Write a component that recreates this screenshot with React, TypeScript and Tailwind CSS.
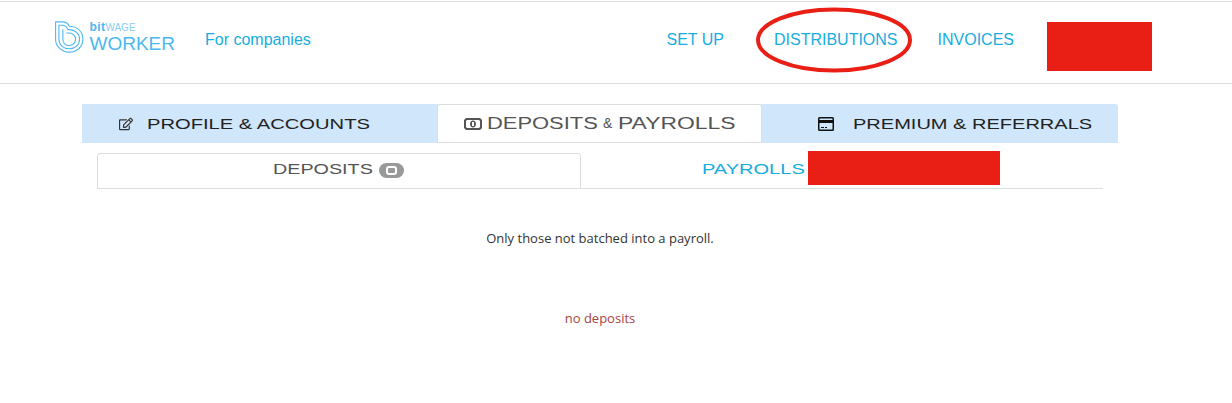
import { FaRegEdit } from 'react-icons/fa'

const WIDE = "font-['Liberation_Sans',sans-serif] inline-block origin-left whitespace-nowrap"

function Logo() {
  return (
    <div className="flex items-center gap-[6px] w-[120px]">
      <svg width="29" height="32" viewBox="0 0 29 32" fill="none" stroke="#4db8f0" strokeWidth="1.1">
        <path d="M.6.6h7.400c3.500 0 5.500 1.800 6.500 4.400 7.500 0 13.900 5 13.900 13 0 7.500-6 13.400-13.700 13.400S.6 25.500.6 18.500z" />
        <path d="M4 4h3.500c3 0 4.500 1.500 5.500 4.500h1.500c6 0 10.500 4 10.500 9.800S20.500 28 14.500 28 4 23.800 4 18.300z" />
        <path d="M8 8v10.300c0 3.700 3 6.400 6.500 6.400s6.500-2.800 6.500-6.400-3-6.300-6.500-6.300h-3" />
      </svg>
      <div className="flex flex-col font-['Liberation_Sans',sans-serif] text-[#4db8f0] leading-none">
        <span className="text-[12px] h-[13px] leading-[12px]"><span className="font-semibold tracking-[0.4px]">bit</span><span className="text-[10px] text-[#8accf2]">WAGE</span></span>
        <span className="text-[19px] leading-[19px] h-[19px] font-light">WORKER</span>
      </div>
    </div>
  )
}

export default function App() {
  return (
    <div className="w-[1232px] h-[403px] bg-white overflow-hidden relative font-['Liberation_Sans',sans-serif]">
      <header className="mt-[1px] h-[83px] border-y border-[#dddddd] flex items-start pl-[55px] pr-[80px]">
        <div className="mt-[19px]"><Logo /></div>
        <a className="ml-[30px] mt-[28px] text-[16px] leading-5 text-[#17ade0]">For companies</a>
        <nav className="ml-auto flex items-start text-[16px] leading-5 text-[#17ade0]">
          <a className="mt-[28px] mr-[50px]">SET UP</a>
          <a className="mt-[28px] mr-[40px]">DISTRIBUTIONS</a>
          <a className="mt-[28px] mr-[33px]">INVOICES</a>
          <div className="mt-[20px] w-[105px] h-[49px] bg-[#e91f16]" />
        </nav>
      </header>

      <main className="w-[1036px] ml-[82px] mt-[20px]">
        <div className="flex h-[39px] bg-[#d0e6fa] rounded-tr-[3px]">
          <div className="w-[355px] pl-[37px] flex items-center text-[#222222]">
            <FaRegEdit className="w-[14px] h-[14px] text-[#333333]" />
            <span className={`${WIDE} ml-[14px] pt-[2px] text-[14px] scale-x-[1.44]`}>PROFILE &amp; ACCOUNTS</span>
          </div>
          <div className="w-[325px] h-[39px] bg-white border border-[#dddddd] rounded-t-[3px] pl-[26px] flex items-center text-[#555555]">
            <svg width="18" height="12" viewBox="0 0 18 12" fill="#555555">
              <path fillRule="evenodd" d="M2 0h14l2 2v8l-2 2H2l-2-2V2zM3 2 2 3v6l1 1h12l1-1V3l-1-1z" />
              <path fillRule="evenodd" d="M9 2.500c1.700 0 3 1.600 3 3.500s-1.300 3.500-3 3.500S6 7.900 6 6s1.300-3.500 3-3.500zM8 4v4h2V4z" />
            </svg>
            <span className={`${WIDE} ml-[5px] w-[116px] text-[16px] scale-x-[1.37]`}>DEPOSITS</span>
            <span className="w-[15px] text-[14px]">&amp;</span>
            <span className={`${WIDE} text-[16px] scale-x-[1.43]`}>PAYROLLS</span>
          </div>
          <div className="flex-1 pl-[56px] flex items-center text-[#222222]">
            <svg width="16" height="14" viewBox="0 0 16 14" fill="#111111">
              <path fillRule="evenodd" d="M1.500 0h13A1.500 1.500 0 0 1 16 1.500v11a1.500 1.500 0 0 1-1.500 1.500h-13A1.500 1.500 0 0 1 0 12.500v-11A1.500 1.500 0 0 1 1.500 0zM1.500 3h13V1.500h-13zM1.500 6v6.500h13V6zM3 10h3v1H3zM7 10h2v1H7z" />
            </svg>
            <span className={`${WIDE} ml-[19px] pt-[2px] text-[14px] scale-x-[1.43]`}>PREMIUM &amp; REFERRALS</span>
          </div>
        </div>

        <div className="ml-[15px] w-[1006px] mt-[10px] h-[36px] flex border-b border-[#dddddd] text-[14px]">
          <div className="w-[484px] h-[36px] bg-white border border-[#dddddd] rounded-t-[3px] pl-[175px] pb-[3px] flex items-center text-[#555555]">
            <span className={`${WIDE} w-[106px] scale-x-[1.41]`}>DEPOSITS</span>
            <span className="w-[25px] h-[15px] mt-[2px] rounded-full bg-[#999999] flex items-center justify-center">
              <span className="w-[11px] h-[9px] border-2 border-white rounded-[3px]" />
            </span>
          </div>
          <div className="relative flex-1 pl-[121px] pb-[3px] flex items-center text-[#17ade0]">
            <span className={`${WIDE} scale-x-[1.43]`}>PAYROLLS</span>
            <div className="absolute left-[227px] -top-[2px] w-[192px] h-[34px] bg-[#e91f16]" />
          </div>
        </div>

        <p className="mt-[40px] text-center font-['Open_Sans',sans-serif] text-[13px] leading-[18px] text-[#333333]">Only those not batched into a payroll.</p>
        <p className="mt-[62px] text-center font-['Open_Sans',sans-serif] text-[13px] leading-[18px] text-[#a94442]">no deposits</p>
      </main>

      <svg className="absolute left-[755px] top-[6px]" width="158" height="68" viewBox="0 0 158 68" fill="none">
        <ellipse cx="79" cy="34" rx="76" ry="30.500" stroke="#e91f16" strokeWidth="4" />
      </svg>
    </div>
  )
}
